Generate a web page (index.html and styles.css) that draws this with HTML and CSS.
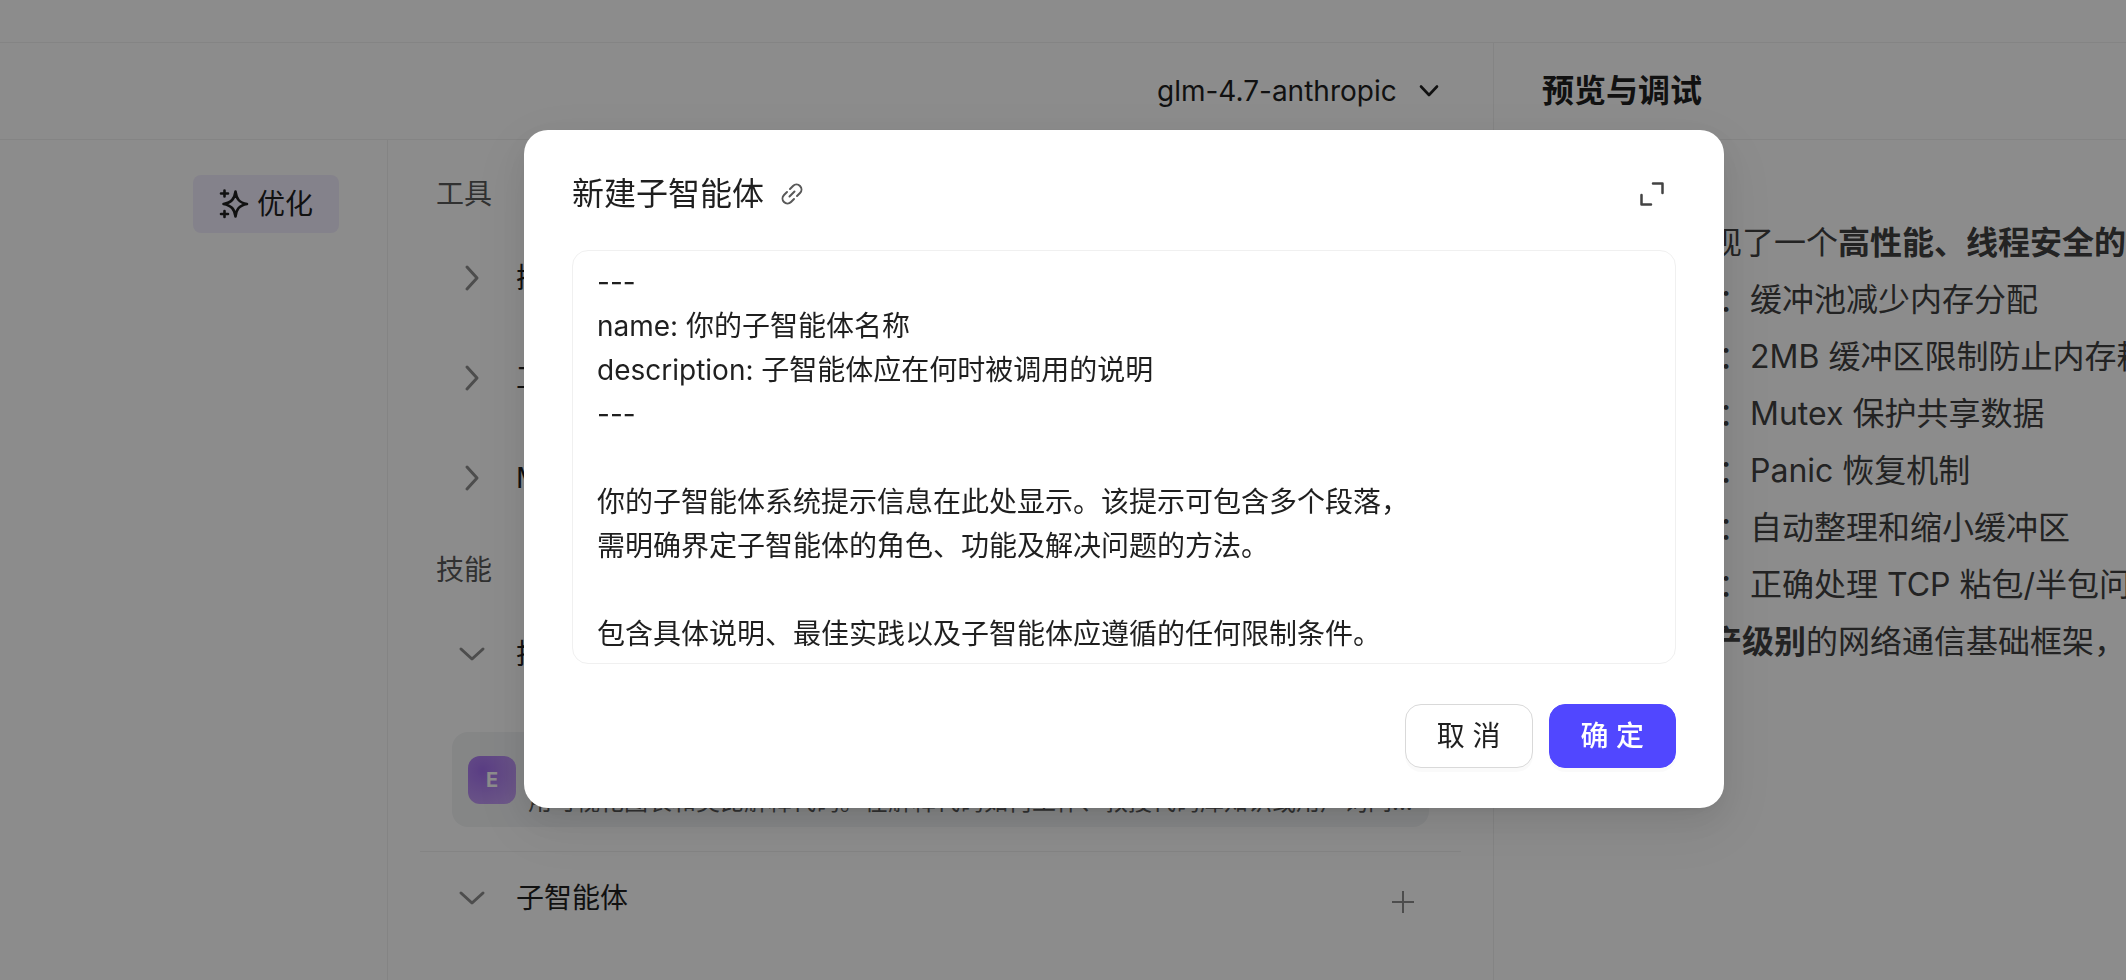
FILE: index.html
```html
<!DOCTYPE html>
<html lang="zh-CN">
<head>
    <meta charset="UTF-8">
    <meta name="viewport" content="width=device-width, initial-scale=1.0">
    <title>新建子智能体</title>
    <link rel="stylesheet" href="styles.css">
</head>
<body>
    <div class="page">
        <div class="topbar"></div>
        <div class="workspace">
            <section class="editor">
                <header class="editor-header">
                    <div class="model">
                        <select class="model-select" aria-label="模型">
                            <option>glm-4.7-anthropic</option>
                        </select>
                        <svg class="model-arrow" width="20" height="14" viewBox="0 0 20 14" fill="none" stroke="#1f1f1f" stroke-width="2.6" stroke-linecap="round" stroke-linejoin="round"><path d="M2 2.500L10 11L18 2.500"/></svg>
                    </div>
                </header>
                <div class="editor-body">
                    <div class="prompt-panel">
                        <button type="button" class="optimize">
                            <svg width="30" height="32" viewBox="0 0 30 32" fill="none" stroke="#1f1f1f" stroke-width="2.6" stroke-linecap="round" stroke-linejoin="round">
                                <path d="M16.500 3.500C17.500 11 20 14.500 28 16C20 17.500 17.500 21 16.500 28.500C15.500 21 12.500 17.500 4.500 16C12.500 14.500 15.500 11 16.500 3.500Z"/>
                                <path d="M5.500 2.500V8.500M2 5.500H9M5.500 23V29M2 26H9"/>
                            </svg>
                            <span>优化</span>
                        </button>
                    </div>
                    <div class="config-panel">
                        <h3 class="group-title">工具</h3>
                        <div class="row">
                            <svg class="arrow" width="28" height="28" viewBox="0 0 28 28"><path d="M9 3L19 14L9 25"/></svg>
                            <span>插件</span>
                        </div>
                        <div class="row">
                            <svg class="arrow" width="28" height="28" viewBox="0 0 28 28"><path d="M9 3L19 14L9 25"/></svg>
                            <span>工作流</span>
                        </div>
                        <div class="row">
                            <svg class="arrow" width="28" height="28" viewBox="0 0 28 28"><path d="M9 3L19 14L9 25"/></svg>
                            <span>MCP</span>
                        </div>
                        <h3 class="group-title group-next">技能</h3>
                        <div class="row">
                            <svg class="arrow" width="28" height="28" viewBox="0 0 28 28"><path d="M3 9L14 19L25 9"/></svg>
                            <span>技能</span>
                        </div>
                        <div class="skill">
                            <div class="skill-icon">E</div>
                            <div class="skill-info">
                                <div class="skill-name">explain-code</div>
                                <div class="skill-desc">用可视化图表和类比解释代码。在解释代码如何工作、教授代码库知识或用户询问...</div>
                            </div>
                        </div>
                        <div class="row row-agent">
                            <svg class="arrow" width="28" height="28" viewBox="0 0 28 28"><path d="M3 9L14 19L25 9"/></svg>
                            <span>子智能体</span>
                            <button type="button" class="add" aria-label="添加">
                                <svg width="24" height="24" viewBox="0 0 24 24" fill="none" stroke="#8c8c8c" stroke-width="2"><path d="M12 1V23M1 12H23"/></svg>
                            </button>
                        </div>
                    </div>
                </div>
            </section>
            <section class="preview">
                <header class="preview-header"><h2>预览与调试</h2></header>
                <div class="message">
                    <p>这段代码实现了一个<strong>高性能、线程安全的</strong></p>
                    <ul>
                        <li><strong>内存优化</strong>：缓冲池减少内存分配</li>
                        <li><strong>资源保护</strong>：2MB 缓冲区限制防止内存耗尽</li>
                        <li><strong>线程安全</strong>：Mutex 保护共享数据</li>
                        <li><strong>异常处理</strong>：Panic 恢复机制</li>
                        <li><strong>自动清理</strong>：自动整理和缩小缓冲区</li>
                        <li><strong>协议支持</strong>：正确处理 TCP 粘包/半包问题</li>
                    </ul>
                    <p>这是一个生<strong>产级别</strong>的网络通信基础框架，</p>
                </div>
            </section>
        </div>
    </div>

    <!-- 弹窗 -->
    <div class="mask">
        <div class="modal" role="dialog" aria-modal="true" aria-labelledby="modal_title">
            <div class="modal-header">
                <h1 id="modal_title">新建子智能体</h1>
                <a class="doc-link" href="#" aria-label="文档">
                    <svg width="24" height="24" viewBox="0 0 24 24" fill="none" stroke="#595959" stroke-width="2" stroke-linecap="round"><path d="M10 7L13 4A4.500 4.500 0 0 1 20 11L17 14M14 17L11 20A4.500 4.500 0 0 1 4 13L7 10M9.500 14.500L14.500 9.500"/></svg>
                </a>
                <button type="button" class="expand" aria-label="全屏">
                    <svg width="24" height="24" viewBox="0 0 24 24" fill="none" stroke="#434343" stroke-width="2.500" stroke-linecap="round" stroke-linejoin="round"><path d="M13 1.500H22.500V11M1.500 13V22.500H11"/></svg>
                </button>
            </div>
            <textarea class="agent-text" rows="9" aria-label="子智能体内容" spellcheck="false">---
name: 你的子智能体名称
description: 子智能体应在何时被调用的说明
---

你的子智能体系统提示信息在此处显示。该提示可包含多个段落，
需明确界定子智能体的角色、功能及解决问题的方法。

包含具体说明、最佳实践以及子智能体应遵循的任何限制条件。</textarea>
            <div class="modal-footer">
                <button type="button" class="btn">取 消</button>
                <button type="button" class="btn btn-primary">确 定</button>
            </div>
        </div>
    </div>
</body>
</html>
```
FILE: styles.css
```css
* {
    box-sizing: border-box;
}

body {
    margin: 0;
    font-family: Inter, "Noto Sans CJK SC", sans-serif;
    font-size: 28px;
    line-height: 44px;
    color: #1f1f1f;
    background-color: #fff;
}

h1, h2, h3, p, ul {
    margin: 0;
    padding: 0;
}

button, select, textarea {
    font: inherit;
    color: inherit;
}

button {
    padding: 0;
    border: none;
    background: none;
    cursor: pointer;
}

svg {
    display: block;
    flex: none;
}

.page {
    display: flex;
    flex-direction: column;
    height: 100vh;
    overflow: hidden;
}

.topbar {
    flex: none;
    height: 43px;
    border-bottom: 1px solid #f0f0f0;
}

.workspace {
    flex: 1;
    display: grid;
    grid-template-columns: minmax(0, 1493fr) minmax(0, 633fr);
}

.editor {
    display: flex;
    flex-direction: column;
}

.editor-header,
.preview-header {
    display: flex;
    align-items: center;
    height: 97px;
    border-bottom: 1px solid #f0f0f0;
}

.editor-header {
    justify-content: flex-end;
    padding-right: 54px;
}

.model {
    display: grid;
    align-items: center;
}

.model-select {
    grid-area: 1 / 1;
    appearance: none;
    padding: 0 42px 0 0;
    border: none;
    background: none;
}

.model-arrow {
    grid-area: 1 / 1;
    justify-self: end;
    pointer-events: none;
}

.editor-body {
    flex: 1;
    display: grid;
    grid-template-columns: minmax(0, 388fr) minmax(0, 1105fr);
}

/* 左侧提示词 */
.prompt-panel {
    display: flex;
    justify-content: flex-end;
    align-items: flex-start;
    padding: 35px 48px;
    border-right: 1px solid #f0f0f0;
}

.optimize {
    display: flex;
    align-items: center;
    gap: 8px;
    height: 58px;
    padding: 0 26px;
    border-radius: 8px;
    background-color: #f1edfe;
}

/* 中间配置 */
.config-panel {
    padding: 32px;
}

.group-title {
    padding-left: 16px;
    margin-bottom: 12px;
    font-size: 28px;
    font-weight: 400;
    color: #595959;
}

.group-next {
    margin-top: 20px;
}

.row {
    display: flex;
    align-items: center;
    gap: 30px;
    height: 100px;
    padding: 0 46px 0 38px;
}

.arrow {
    fill: none;
    stroke: #8c8c8c;
    stroke-width: 3;
    stroke-linecap: round;
    stroke-linejoin: round;
}

.skill {
    display: flex;
    align-items: center;
    gap: 12px;
    height: 95px;
    margin: 28px 32px 24px;
    padding: 0 16px;
    border-radius: 16px;
    background-color: #f2f4f5;
}

.skill-icon {
    flex: none;
    width: 48px;
    height: 48px;
    border-radius: 12px;
    background: radial-gradient(circle at 30% 30%, #a470f0, #cba8f8);
    color: #fff;
    font-size: 20px;
    font-weight: 700;
    line-height: 48px;
    text-align: center;
}

.skill-info {
    min-width: 0;
    font-size: 24px;
    line-height: 44px;
    white-space: nowrap;
}

.skill-desc {
    color: #595959;
}

.row-agent {
    height: 92px;
    border-top: 1px solid #f0f0f0;
}

.add {
    margin-top: 8px;
    margin-left: auto;
}

/* 右侧预览 */
.preview {
    border-left: 1px solid #f0f0f0;
    overflow: hidden;
}

.preview-header {
    padding-left: 48px;
}

.preview-header h2 {
    font-size: 32px;
    font-weight: 700;
}

.message {
    padding: 74px 0 0 56px;
    font-size: 32px;
    line-height: 57px;
    color: #404040;
    white-space: nowrap;
}

.message ul {
    padding-left: 40px;
}

/* 弹窗 */
.mask {
    position: fixed;
    inset: 0;
    display: flex;
    justify-content: center;
    align-items: flex-start;
    padding: 130px 0 0 122px;
    background-color: rgba(0, 0, 0, 0.45);
}

.modal {
    width: 1200px;
    max-width: 100%;
    padding: 40px 48px;
    border-radius: 24px;
    background-color: #fff;
    box-shadow: 0 12px 32px rgba(0, 0, 0, 0.08), 0 6px 12px -8px rgba(0, 0, 0, 0.12), 0 18px 56px 16px rgba(0, 0, 0, 0.05);
}

.modal-header {
    display: flex;
    align-items: center;
    gap: 16px;
    margin-bottom: 32px;
}

.modal-header h1 {
    font-size: 32px;
    font-weight: 400;
    line-height: 48px;
}

.expand {
    margin-left: auto;
    margin-right: 12px;
}

.agent-text {
    display: block;
    width: 100%;
    padding: 9px 24px 7px;
    border: 1px solid #f0f0f0;
    border-radius: 16px;
    background-color: #fff;
    line-height: 44px;
    resize: none;
    outline: none;
    overflow: hidden;
}

.modal-footer {
    display: flex;
    justify-content: flex-end;
    gap: 16px;
    margin-top: 40px;
}

.btn {
    height: 64px;
    padding: 0 31px;
    border: 1px solid #d9d9d9;
    border-radius: 16px;
    background-color: #fff;
    box-shadow: 0 4px 0 rgba(0, 0, 0, 0.02);
}

.btn-primary {
    border-color: #5147ff;
    background-color: #5147ff;
    color: #fff;
    font-weight: 500;
}
```
